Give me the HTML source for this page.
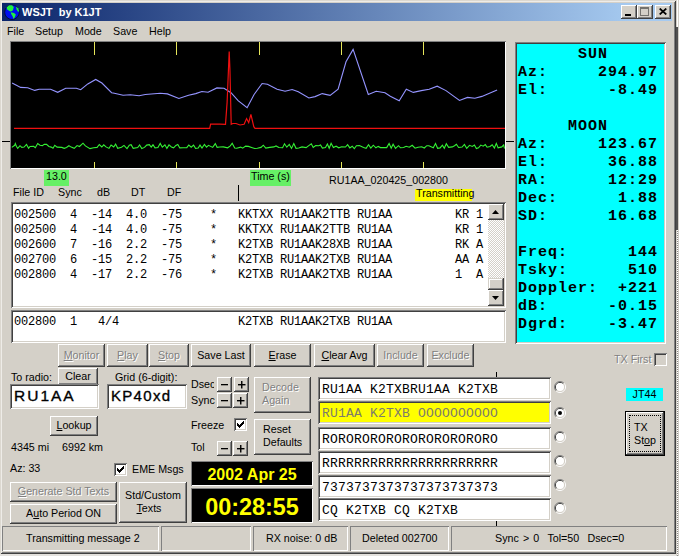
<!DOCTYPE html>
<html><head><meta charset="utf-8">
<style>
*{margin:0;padding:0;box-sizing:border-box}
html,body{width:679px;height:556px;overflow:hidden;background:#e4e2de;font-family:"Liberation Sans",sans-serif;font-size:11px;color:#000}
.a{position:absolute}
.t{position:absolute;white-space:pre;line-height:13px;font-size:10.7px}
#win{left:0;top:0;width:676px;height:554px;background:#d4d0c8;box-shadow:inset 1px 1px #dcd8d0,inset -1px -1px #404040,inset 2px 2px #eeece8,inset -2px -2px #808080}
.btn{position:absolute;background:#d4d0c8;box-shadow:inset -1px -1px #404040,inset 1px 1px #fff,inset -2px -2px #808080;text-align:center;white-space:pre;font-size:10.7px;line-height:13px}
.sunk{position:absolute;background:#fff;box-shadow:inset 1px 1px #808080,inset -1px -1px #fff,inset 2px 2px #404040,inset -2px -2px #d4d0c8}
.thin{position:absolute;box-shadow:inset 1px 1px #808080,inset -1px -1px #fff}
.dis{color:#808080;text-shadow:1px 1px #fff}
.mono{font-family:"Liberation Mono",monospace}
u{text-decoration:underline}
.tick{position:absolute;width:1px;background:#e6e65a}
.rad{position:absolute;width:12px;height:12px}
.chk{position:absolute;width:13px;height:13px;background:#fff;box-shadow:inset 1px 1px #808080,inset -1px -1px #fff,inset 2px 2px #404040,inset -2px -2px #d4d0c8}
.tb{position:absolute;width:16px;height:14px;background:#d4d0c8;box-shadow:inset -1px -1px #404040,inset 1px 1px #fff,inset -2px -2px #808080}
.cy{position:absolute;left:518px;font-family:"Liberation Mono",monospace;font-weight:bold;font-size:15px;letter-spacing:1px;line-height:18px;white-space:pre}
.row{position:absolute;left:14px;font-family:"Liberation Mono",monospace;font-size:12px;letter-spacing:-0.2px;line-height:15px;white-space:pre}
.tx{position:absolute;left:318px;width:233px;height:23px}
.txt{position:absolute;left:4px;top:5px;font-family:"Liberation Mono",monospace;font-size:13px;letter-spacing:0.2px;line-height:15px;white-space:pre}
.pm{position:absolute;width:16px;height:15px;background:#d4d0c8;box-shadow:inset -1px -1px #404040,inset 1px 1px #fff,inset -2px -2px #808080;font-size:13px;line-height:14px;text-align:center}
</style></head><body>
<div class="a" style="left:676px;top:0;width:3px;height:556px;background:#d4d0c8"></div><div class="a" style="left:677px;top:0;width:1px;height:27px;background:#fff"></div><div class="a" style="left:676px;top:27px;width:2px;height:203px;background:#505050"></div><div class="a" style="left:677px;top:230px;width:1px;height:326px;background-image:repeating-linear-gradient(#fff 0 1px,#888 1px 2px)"></div>
<div id="win" class="a">
 <!-- title bar -->
 <div class="a" style="left:2px;top:3px;width:670px;height:18px;background:linear-gradient(to right,#0a246a,#a6caf0 94%)"></div>
 <svg class="a" style="left:0;top:0" width="24" height="24">
  <circle cx="12" cy="12.2" r="7.3" fill="#0010f0" stroke="#000830" stroke-width="0.8"/>
  <path d="M6.5,7.5 L9,5.2 L12,5.3 L13.8,7 L13.2,9.2 L12.3,11 L10.3,11.6 L8.3,10.2 L7.2,9.2 Z" fill="#20f040"/>
  <path d="M10.8,12.2 L14,13 L15.8,14.6 L15,17 L13.5,19 L12.6,16.2 L11.2,14 Z" fill="#20f040"/>
  <path d="M16,6.4 L18.2,8.2 L19.1,11 L18.2,12 L16.6,9.4 Z" fill="#20f040"/>
 </svg>
 <div class="t" style="left:22px;top:6px;color:#fff;font-weight:bold;font-size:11px">WSJT  by K1JT</div>
 <div class="tb" style="left:621px;top:5px"><div class="a" style="left:4px;top:9px;width:6px;height:2px;background:#000"></div></div>
 <div class="tb" style="left:637px;top:5px"><div class="a" style="left:3px;top:2px;width:9px;height:9px;border:1px solid #000;border-top-width:2px;opacity:.45"></div></div>
 <div class="tb" style="left:655px;top:5px"><svg class="a" style="left:4px;top:3px" width="8" height="7"><path d="M0.7,0.5 L7.3,6.5 M7.3,0.5 L0.7,6.5" stroke="#000" stroke-width="1.7"/></svg></div>
 <!-- menu -->
 <div class="t" style="left:7px;top:25px">File</div>
 <div class="t" style="left:35px;top:25px">Setup</div>
 <div class="t" style="left:75px;top:25px">Mode</div>
 <div class="t" style="left:113px;top:25px">Save</div>
 <div class="t" style="left:149px;top:25px">Help</div>
 <!-- plot -->
 <div class="a" style="left:10px;top:41px;width:496px;height:128px;background:#000;box-shadow:inset 1px 1px #808080,inset -1px -1px #fff"></div>
 <div class="tick" style="left:94px;top:42px;height:13px"></div>
 <div class="tick" style="left:176px;top:42px;height:13px"></div>
 <div class="tick" style="left:259px;top:42px;height:13px"></div>
 <div class="tick" style="left:341px;top:42px;height:13px"></div>
 <div class="tick" style="left:423px;top:42px;height:13px"></div>
 <div class="tick" style="left:94px;top:162px;height:6px"></div>
 <div class="tick" style="left:176px;top:162px;height:6px"></div>
 <div class="tick" style="left:259px;top:162px;height:6px"></div>
 <div class="tick" style="left:341px;top:162px;height:6px"></div>
 <div class="tick" style="left:423px;top:162px;height:6px"></div>
 <div class="a" style="left:2px;top:141px;width:8px;height:1px;background:#000"></div>
 <div class="a" style="left:506px;top:141px;width:8px;height:1px;background:#000"></div>
 <svg class="a" style="left:0;top:0" width="679" height="556">
  <polyline points="12.1,83.0 20.6,87.4 27.7,87.7 34.7,90.4 39.2,89.2 50.6,89.2 57.7,92.3 65.7,88.3 76.3,88.3 80.7,89.7 87.8,83.9 95.7,79.4 101.9,83.0 111.6,92.7 114.3,93.2 123.1,95.3 130.3,94.8 139.1,95.7 145.3,94.5 160.3,93.2 167.4,93.9 178.9,98.4 188.6,95.3 195.7,93.6 201.9,91.5 208.1,92.3 216.9,87.9 224.0,88.3 231.0,92.7 238.1,100.6 247.1,107.7 254.1,94.5 262.1,83.5 267.4,84.2 277.1,89.2 285.1,91.3 292.1,89.5 298.3,91.8 308.9,98.0 315.1,96.6 322.2,93.6 330.1,95.4 338.1,89.2 346.0,61.8 353.1,49.4 368.3,94.5 376.2,91.3 385.0,92.7 390.3,96.3 399.2,100.7 406.3,89.2 413.3,92.4 421.3,90.6 429.2,89.2 437.2,86.2 446.0,90.6 459.5,100.5 467.5,97.4 474.9,98.3 481.9,96.4 497.1,89.9" fill="none" stroke="#9494ff" stroke-width="1.1"/>
  <polyline points="11.8,147.4 14.7,145.3 15.3,143.5 16.5,146.5 17.7,148.3 20.0,145.7 21.8,147.4 24.1,147.1 26.5,144.4 28.6,148.3 30.0,146.5 33.6,146.3 35.3,147.7 37.7,143.5 40.0,145.3 42.4,145.6 44.2,144.4 46.5,144.4 48.9,146.5 51.2,147.1 53.0,148.3 54.8,145.3 57.1,147.1 61.8,147.4 64.2,148.3 66.5,147.4 68.9,145.7 71.2,147.1 74.2,148.3 77.1,145.6 79.5,146.5 83.0,143.2 85.4,145.9 90.0,148.6 93.6,147.7 97.1,147.4 99.3,144.5 101.8,147.0 103.7,144.8 106.0,146.9 109.0,148.4 111.1,145.0 113.7,147.0 115.6,144.1 117.7,148.3 121.5,147.3 124.0,145.4 127.0,148.6 129.3,145.3 131.1,144.7 133.2,148.3 137.7,147.6 139.6,145.0 141.8,148.6 144.5,147.4 146.7,145.1 149.3,144.7 151.2,147.2 153.0,144.8 155.0,147.8 157.9,147.5 160.2,143.4 162.3,147.2 164.9,144.8 166.9,148.4 169.0,144.9 171.4,147.0 173.6,147.8 175.9,145.4 177.8,144.4 179.8,147.9 183.2,147.8 186.8,147.7 188.8,145.0 191.2,147.2 193.6,145.1 195.6,148.5 198.2,148.0 200.0,145.1 202.0,148.1 204.4,144.4 206.5,147.1 208.5,145.3 212.7,147.4 215.3,143.6 217.1,147.3 219.7,147.0 223.4,146.9 227.6,147.8 230.3,145.9 232.2,143.2 234.7,148.1 236.7,148.3 240.7,147.1 242.7,148.2 245.6,146.1 248.4,146.4 252.3,147.7 254.7,148.5 257.3,148.3 261.0,147.4 263.3,145.2 265.8,148.1 269.7,147.4 273.9,146.9 276.0,145.9 278.9,147.5 282.6,147.7 284.5,143.8 286.8,147.2 289.3,144.5 291.5,148.4 293.8,143.6 296.0,148.3 298.8,148.0 302.0,146.9 306.1,147.6 309.1,145.4 311.3,143.8 313.2,147.5 315.7,145.5 318.7,145.7 320.5,144.9 322.4,148.1 325.5,147.6 327.4,144.1 329.2,148.3 331.1,143.3 333.4,147.6 336.1,146.2 338.8,147.8 341.6,146.8 345.5,147.0 347.6,144.6 349.8,147.9 352.2,146.2 354.3,148.7 356.4,145.7 359.4,145.6 363.6,147.6 366.1,148.3 368.5,144.8 370.8,148.1 373.3,145.2 375.9,147.8 378.2,146.4 380.5,147.6 384.1,147.6 386.7,147.6 389.1,143.5 391.2,148.2 393.1,144.2 395.5,148.3 398.5,145.7 400.5,147.8 403.6,147.5 406.1,146.3 409.3,147.2 412.2,145.3 415.1,148.2 418.0,147.3 421.7,146.8 424.3,148.0 426.8,145.7 428.9,145.8 433.3,147.7 435.5,143.5 437.6,148.3 440.1,147.9 442.4,145.1 444.3,148.2 446.3,143.7 448.6,147.4 452.3,146.9 454.5,145.8 456.4,144.3 458.6,147.5 462.1,147.0 464.4,144.5 466.7,148.3 469.5,145.3 472.3,146.4 474.4,145.0 476.4,148.6 478.5,147.8 480.8,145.1 483.2,146.2 485.3,144.6 487.1,147.2 490.0,146.5 492.2,144.7 494.4,148.0 496.3,143.4 498.1,147.8 501.8,146.9 503.7,144.9 504.5,148.5" fill="none" stroke="#34f034" stroke-width="1.1"/>
  <polyline points="14.0,128.3 209.7,128.3 210.6,124.2 219.6,124.2 225.5,124.3 227.1,102.4 229.2,51.5 229.9,68.5 231.2,124.3 232.8,123.5 236.0,123.5 240.0,125.0 244.1,124.3 246.6,118.6 248.7,122.7 250.9,114.3 253.8,126.7 255.0,128.3 505.0,128.3" fill="none" stroke="#ee1010" stroke-width="1.2"/>
 </svg>
 <div class="a" style="left:44px;top:170px;width:25px;height:16px;background:#66f066"></div>
 <div class="t" style="left:46px;top:170px">13.0</div>
 <div class="a" style="left:250px;top:170px;width:41px;height:16px;background:#66f066"></div>
 <div class="t" style="left:251px;top:170px">Time (s)</div>
 <div class="t" style="left:329px;top:174px">RU1AA_020425_002800</div>
 <div class="a" style="left:415px;top:189px;width:57px;height:12px;background:#ffff00"></div>
 <div class="t" style="left:416px;top:187px">Transmitting</div>
 <div class="t" style="left:13px;top:186px">File ID</div>
 <div class="t" style="left:58px;top:186px">Sync</div>
 <div class="t" style="left:97px;top:186px">dB</div>
 <div class="t" style="left:131px;top:186px">DT</div>
 <div class="t" style="left:167px;top:186px">DF</div>
 <div class="a" style="left:238px;top:185px;width:1px;height:16px;background:#000"></div>
 <!-- list -->
 <div class="sunk" style="left:11px;top:202px;width:495px;height:106px"></div>
 <div class="row" style="top:208px">002500  4  -14  4.0  -75    *   KKTXX RU1AAK2TTB RU1AA         KR 1</div>
 <div class="row" style="top:223px">002500  4  -14  4.0  -75    *   KKTXX RU1AAK2TTB RU1AA         KR 1</div>
 <div class="row" style="top:238px">002600  7  -16  2.2  -75    *   K2TXB RU1AAK28XB RU1AA         RK A</div>
 <div class="row" style="top:253px">002700  6  -15  2.2  -75    *   K2TXB RU1AAK2TXB RU1AA         AA A</div>
 <div class="row" style="top:268px">002800  4  -17  2.2  -76    *   K2TXB RU1AAK2TXB RU1AA         1  A</div>
 <!-- scrollbar -->
 <div class="a" style="left:488px;top:204px;width:16px;height:102px;background-color:#fff;background-image:repeating-conic-gradient(#d4d0c8 0% 25%,#fff 0% 50%);background-size:2px 2px"></div>
 <div class="btn" style="left:488px;top:204px;width:16px;height:16px"><svg class="a" style="left:4px;top:6px" width="7" height="4"><path d="M3.5,0 L7,4 L0,4 Z" fill="#000"/></svg></div>
 <div class="btn" style="left:488px;top:278px;width:16px;height:12px;box-shadow:inset -1px -1px #404040,inset 1px 1px #d4d0c8,inset -2px -2px #808080,inset 2px 2px #fff"></div>
 <div class="btn" style="left:488px;top:290px;width:16px;height:16px"><svg class="a" style="left:4px;top:6px" width="7" height="4"><path d="M0,0 L7,0 L3.5,4 Z" fill="#000"/></svg></div>
 <!-- second box -->
 <div class="sunk" style="left:11px;top:310px;width:495px;height:33px"></div>
 <div class="row" style="top:315px">002800  1   4/4                 K2TXB RU1AAK2TXB RU1AA</div>
 <!-- buttons -->
 <div class="btn dis" style="left:58px;top:344px;width:47px;height:23px;line-height:22px"><u>M</u>onitor</div>
 <div class="btn dis" style="left:107px;top:344px;width:41px;height:23px;line-height:22px"><u>P</u>lay</div>
 <div class="btn dis" style="left:149px;top:344px;width:40px;height:23px;line-height:22px"><u>S</u>top</div>
 <div class="btn" style="left:191px;top:344px;width:60px;height:23px;line-height:22px">Save Last</div>
 <div class="btn" style="left:254px;top:344px;width:57px;height:23px;line-height:22px"><u>E</u>rase</div>
 <div class="btn" style="left:314px;top:344px;width:61px;height:23px;line-height:22px"><u>C</u>lear Avg</div>
 <div class="btn dis" style="left:377px;top:344px;width:47px;height:23px;line-height:22px">Include</div>
 <div class="btn dis" style="left:427px;top:344px;width:47px;height:23px;line-height:22px">Exclude</div>
 <!-- left lower -->
 <div class="t" style="left:11px;top:371px">To radio:</div>
 <div class="btn" style="left:58px;top:368px;width:40px;height:17px;line-height:17px">Clear</div>
 <div class="sunk" style="left:10px;top:384px;width:89px;height:25px"></div>
 <div class="t" style="left:14px;top:387px;font-size:15.5px;-webkit-text-stroke:0.35px #000;letter-spacing:2px;line-height:18px">RU1AA</div>
 <div class="t" style="left:115px;top:371px">Grid (6-digit):</div>
 <div class="sunk" style="left:107px;top:384px;width:80px;height:25px"></div>
 <div class="t" style="left:111px;top:387px;font-size:15px;-webkit-text-stroke:0.35px #000;letter-spacing:1.3px;line-height:18px">KP40xd</div>
 <div class="btn" style="left:50px;top:416px;width:48px;height:20px;line-height:19px"><u>L</u>ookup</div>
 <div class="t" style="left:11px;top:441px">4345 mi</div>
 <div class="t" style="left:62px;top:441px">6992 km</div>
 <div class="t" style="left:10px;top:462px">Az: 33</div>
 <div class="btn dis" style="left:10px;top:482px;width:107px;height:20px;line-height:19px"><u>G</u>enerate Std Texts</div>
 <div class="btn" style="left:10px;top:504px;width:107px;height:20px;line-height:19px">A<u>u</u>to Period ON</div>
 <div class="chk" style="left:114px;top:463px"><svg class="a" style="left:3px;top:3px" width="7" height="7" shape-rendering="crispEdges"><path d="M6,0h1v3h-1zM5,1h1v3h-1zM4,2h1v3h-1zM3,3h1v3h-1zM2,4h1v3h-1zM1,3h1v3h-1zM0,2h1v3h-1z" fill="#000"/></svg></div>
 <div class="t" style="left:132px;top:463px">EME Msgs</div>
 <div class="btn" style="left:119px;top:482px;width:68px;height:41px;padding-top:7px">Std/Custom
<span style="position:relative;left:-4px"><u>T</u>exts</span></div>
 <!-- middle -->
 <div class="a" style="left:191px;top:377px;width:23px;height:14px;overflow:hidden"><div class="t" style="left:0;top:1px">Dsec</div></div>
 <div class="pm" style="left:217px;top:377px;width:15px;height:15px"><svg class="a" style="left:4px;top:6.5px" width="7" height="2"><rect width="7" height="1.3" fill="#000"/></svg></div>
 <div class="pm" style="left:234px;top:377px;width:15px;height:15px"><svg class="a" style="left:4px;top:4px" width="8" height="8"><rect y="3" width="7.5" height="1.4" fill="#000"/><rect x="3.05" y="0" width="1.4" height="7.5" fill="#000"/></svg></div>
 <div class="t" style="left:191px;top:394px">Sync</div>
 <div class="pm" style="left:217px;top:393px;width:15px;height:15px"><svg class="a" style="left:4px;top:6.5px" width="7" height="2"><rect width="7" height="1.3" fill="#000"/></svg></div>
 <div class="pm" style="left:233px;top:393px;width:15px;height:15px"><svg class="a" style="left:4px;top:4px" width="8" height="8"><rect y="3" width="7.5" height="1.4" fill="#000"/><rect x="3.05" y="0" width="1.4" height="7.5" fill="#000"/></svg></div>
 <div class="btn dis" style="left:254px;top:377px;width:57px;height:36px;padding-top:4px;padding-left:8px;text-align:left">Decode
Again</div>
 <div class="t" style="left:191px;top:419px">Freeze</div>
 <div class="chk" style="left:234px;top:418px"><svg class="a" style="left:3px;top:3px" width="7" height="7" shape-rendering="crispEdges"><path d="M6,0h1v3h-1zM5,1h1v3h-1zM4,2h1v3h-1zM3,3h1v3h-1zM2,4h1v3h-1zM1,3h1v3h-1zM0,2h1v3h-1z" fill="#000"/></svg></div>
 <div class="btn" style="left:254px;top:419px;width:57px;height:36px;padding-top:4px;padding-left:9px;text-align:left">Reset
Defaults</div>
 <div class="t" style="left:191px;top:441px">Tol</div>
 <div class="pm" style="left:217px;top:441px;width:15px;height:15px"><svg class="a" style="left:4px;top:6.5px" width="7" height="2"><rect width="7" height="1.3" fill="#000"/></svg></div>
 <div class="pm" style="left:233px;top:441px;width:15px;height:15px"><svg class="a" style="left:4px;top:4px" width="8" height="8"><rect y="3" width="7.5" height="1.4" fill="#000"/><rect x="3.05" y="0" width="1.4" height="7.5" fill="#000"/></svg></div>
 <div class="a" style="left:191px;top:461px;width:122px;height:25px;background:#000;box-shadow:inset 1px 1px #808080,inset -1px -1px #fff"></div>
 <div class="t" style="left:191px;top:466px;width:122px;text-align:center;color:#ffff00;font-weight:bold;font-size:16px;line-height:18px">2002 Apr 25</div>
 <div class="a" style="left:191px;top:488px;width:122px;height:35px;background:#000;box-shadow:inset 1px 1px #808080,inset -1px -1px #fff"></div>
 <div class="t" style="left:191px;top:494px;width:122px;text-align:center;color:#ffff00;font-weight:bold;font-size:23.4px;line-height:26px">00:28:55</div>
 <!-- tx boxes -->
 <div class="a" style="left:496px;top:372px;width:1px;height:5px;background:#000"></div>
 <div class="a" style="left:496px;top:520px;width:1px;height:6px;background:#000"></div>
 <div class="sunk tx" style="top:377px"><div class="txt">RU1AA K2TXBRU1AA K2TXB</div></div>
 <div class="sunk tx" style="top:401px;background:#ffff00"><div class="txt" style="color:#7c7c6c">RU1AA K2TXB OOOOOOOOOO</div></div>
 <div class="sunk tx" style="top:427px"><div class="txt">RORORORORORORORORORORO</div></div>
 <div class="sunk tx" style="top:451px"><div class="txt">RRRRRRRRRRRRRRRRRRRRRR</div></div>
 <div class="sunk tx" style="top:475px"><div class="txt">7373737373737373737373</div></div>
 <div class="sunk tx" style="top:498px"><div class="txt">CQ K2TXB CQ K2TXB</div></div>
 <div class="rad" style="left:554px;top:381px"><svg width="12" height="12"><path d="M2.1,9.9 A5.5,5.5 0 0 1 9.9,2.1" stroke="#808080" fill="none"/><path d="M9.9,2.1 A5.5,5.5 0 0 1 2.1,9.9" stroke="#fff" fill="none"/><path d="M2.8,9.2 A4.5,4.5 0 0 1 9.2,2.8" stroke="#404040" fill="none"/><path d="M9.2,2.8 A4.5,4.5 0 0 1 2.8,9.2" stroke="#d4d0c8" fill="none"/><circle cx="6" cy="6" r="4" fill="#fff"/></svg></div>
 <div class="rad" style="left:554px;top:407px"><svg width="12" height="12"><path d="M2.1,9.9 A5.5,5.5 0 0 1 9.9,2.1" stroke="#808080" fill="none"/><path d="M9.9,2.1 A5.5,5.5 0 0 1 2.1,9.9" stroke="#fff" fill="none"/><path d="M2.8,9.2 A4.5,4.5 0 0 1 9.2,2.8" stroke="#404040" fill="none"/><path d="M9.2,2.8 A4.5,4.5 0 0 1 2.8,9.2" stroke="#d4d0c8" fill="none"/><circle cx="6" cy="6" r="4" fill="#fff"/><circle cx="6" cy="6" r="2" fill="#000"/></svg></div>
 <div class="rad" style="left:554px;top:431px"><svg width="12" height="12"><path d="M2.1,9.9 A5.5,5.5 0 0 1 9.9,2.1" stroke="#808080" fill="none"/><path d="M9.9,2.1 A5.5,5.5 0 0 1 2.1,9.9" stroke="#fff" fill="none"/><path d="M2.8,9.2 A4.5,4.5 0 0 1 9.2,2.8" stroke="#404040" fill="none"/><path d="M9.2,2.8 A4.5,4.5 0 0 1 2.8,9.2" stroke="#d4d0c8" fill="none"/><circle cx="6" cy="6" r="4" fill="#fff"/></svg></div>
 <div class="rad" style="left:554px;top:455px"><svg width="12" height="12"><path d="M2.1,9.9 A5.5,5.5 0 0 1 9.9,2.1" stroke="#808080" fill="none"/><path d="M9.9,2.1 A5.5,5.5 0 0 1 2.1,9.9" stroke="#fff" fill="none"/><path d="M2.8,9.2 A4.5,4.5 0 0 1 9.2,2.8" stroke="#404040" fill="none"/><path d="M9.2,2.8 A4.5,4.5 0 0 1 2.8,9.2" stroke="#d4d0c8" fill="none"/><circle cx="6" cy="6" r="4" fill="#fff"/></svg></div>
 <div class="rad" style="left:554px;top:479px"><svg width="12" height="12"><path d="M2.1,9.9 A5.5,5.5 0 0 1 9.9,2.1" stroke="#808080" fill="none"/><path d="M9.9,2.1 A5.5,5.5 0 0 1 2.1,9.9" stroke="#fff" fill="none"/><path d="M2.8,9.2 A4.5,4.5 0 0 1 9.2,2.8" stroke="#404040" fill="none"/><path d="M9.2,2.8 A4.5,4.5 0 0 1 2.8,9.2" stroke="#d4d0c8" fill="none"/><circle cx="6" cy="6" r="4" fill="#fff"/></svg></div>
 <div class="rad" style="left:554px;top:502px"><svg width="12" height="12"><path d="M2.1,9.9 A5.5,5.5 0 0 1 9.9,2.1" stroke="#808080" fill="none"/><path d="M9.9,2.1 A5.5,5.5 0 0 1 2.1,9.9" stroke="#fff" fill="none"/><path d="M2.8,9.2 A4.5,4.5 0 0 1 9.2,2.8" stroke="#404040" fill="none"/><path d="M9.2,2.8 A4.5,4.5 0 0 1 2.8,9.2" stroke="#d4d0c8" fill="none"/><circle cx="6" cy="6" r="4" fill="#fff"/></svg></div>
 <!-- right -->
 <div class="t dis" style="left:614px;top:353px">TX First</div>
 <div class="chk" style="left:654px;top:353px;background:#d4d0c8"></div>
 <div class="a" style="left:626px;top:388px;width:37px;height:13px;background:#00ffff"></div>
 <div class="t" style="left:626px;top:388px;width:37px;text-align:center">JT44</div>
 <div class="a" style="left:625px;top:411px;width:40px;height:45px;background:#000"></div>
 <div class="btn" style="left:626px;top:412px;width:38px;height:43px;padding-top:9px;padding-left:8px;text-align:left">TX
St<u>o</u>p</div>
 <div class="a" style="left:629px;top:415px;width:32px;height:37px;border:1px dotted #000"></div>
 <!-- cyan panel -->
 <div class="a" style="left:515px;top:42px;width:151px;height:302px;background:#00ffff;box-shadow:inset 1px 1px #808080,inset -1px -1px #fff,inset 2px 2px #404040,inset -2px -2px #d4d0c8"></div>
 <div class="cy" style="top:46px">      SUN
Az:     294.97
El:      -8.49

     MOON
Az:     123.67
El:      36.88
RA:      12:29
Dec:      1.88
SD:      16.68

Freq:      144
Tsky:      510
Doppler:  +221
dB:      -0.15
Dgrd:    -3.47</div>
 <!-- status bar -->
 <div class="thin" style="left:2px;top:526px;width:157px;height:25px"></div>
 <div class="thin" style="left:161px;top:526px;width:90px;height:25px"></div>
 <div class="thin" style="left:253px;top:526px;width:95px;height:25px"></div>
 <div class="thin" style="left:350px;top:526px;width:99px;height:25px"></div>
 <div class="thin" style="left:451px;top:526px;width:216px;height:25px"></div>
 <div class="t" style="left:26px;top:532px">Transmitting message 2</div>
 <div class="t" style="left:266px;top:532px">RX noise: 0 dB</div>
 <div class="t" style="left:362px;top:532px">Deleted 002700</div>
 <div class="t" style="left:495px;top:532px;word-spacing:1.2px">Sync &gt; 0  Tol=50  Dsec=0</div>
</div>
</body></html>
